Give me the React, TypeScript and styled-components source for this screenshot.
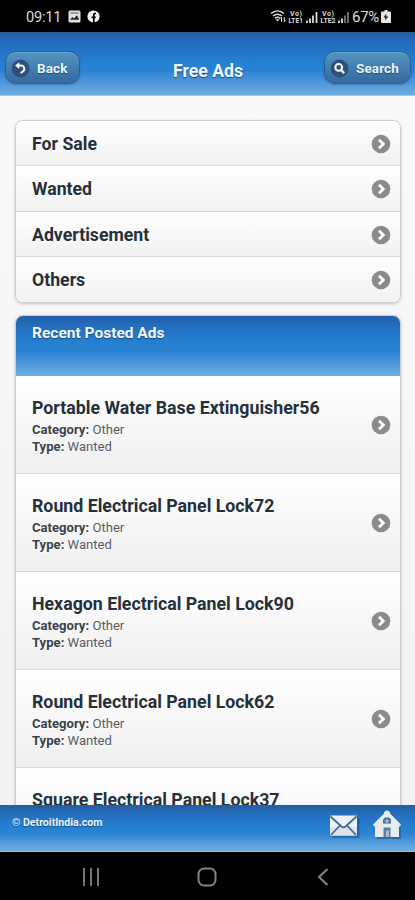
import React from "react";
import styled, { createGlobalStyle } from "styled-components";

const GlobalStyle = createGlobalStyle`
  * { box-sizing: border-box; }
  body { margin: 0; background: #f6f6f6; font-family: Roboto, "Liberation Sans", sans-serif; }
`;

const BLUE = `linear-gradient(to bottom, #225fa8 0%, #2472c3 25%, #2583d3 50%, #2a80d0 60%, #4f99da 80%, #70ade0 100%)`;

const Screen = styled.div`
  width: 415px;
  height: 900px;
  overflow: hidden;
  display: flex;
  flex-direction: column;
  background: linear-gradient(to bottom, #fafafa, #f0f0f0);
`;

const StatusBar = styled.div`
  flex: none;
  height: 32px;
  padding: 0 24px 0 26px;
  display: flex;
  align-items: center;
  justify-content: space-between;
  background: #000;
  color: #dcdcdc;
`;

const StatusGroup = styled.div<{ $gap: number }>`
  display: flex;
  align-items: center;
  gap: ${(p) => p.$gap}px;
  height: 32px;
`;

const Clock = styled.span`
  font-size: 14.6px;
  line-height: 32px;
  width: 35px;
  letter-spacing: -0.2px;
  margin-right: 1px;
  padding-top: 2px;
`;

const Battery = styled.span`
  font-size: 15px;
  line-height: 32px;
  letter-spacing: -0.3px;
  padding-top: 2px;
`;

const Header = styled.header`
  flex: none;
  height: 64px;
  padding: 6px 4px 0 5px;
  display: grid;
  grid-template-columns: 87px 1fr 87px;
  align-items: center;
  background: ${BLUE};
  border-top: 1px solid #2a5c91;
  border-bottom: 1px solid #9cc6ea;
`;

const Title = styled.h1`
  margin: 7px 0 0;
  text-align: center;
  font-size: 17.6px;
  line-height: 22px;
  font-weight: 700;
  color: #f0f7fd;
  text-shadow: 0 1px 1px #194b7e;
`;

const HeaderButton = styled.button<{ $width: number }>`
  justify-self: ${(p) => (p.$width > 80 ? "end" : "start")};
  width: ${(p) => p.$width}px;
  height: 33px;
  padding: 2px 0 0 5px;
  display: flex;
  align-items: center;
  gap: 7px;
  border: 1px solid #2d5f91;
  border-radius: 11px;
  background: linear-gradient(to bottom, #5394c2, #34699f);
  box-shadow: inset 0 1px 0 #6ea7d0, 0 1px 2px rgba(20, 60, 110, 0.35);
  color: #edf5fb;
  font: 700 13.5px/20px Roboto, sans-serif;
  letter-spacing: 0.1px;
  text-shadow: 0 1px 1px #194b7e;
`;

const Content = styled.main`
  flex: 1;
  min-height: 0;
  overflow: hidden;
  padding: 24px 14px 0 15px;
`;

const Panel = styled.section`
  border: 1px solid #cdcdcd;
  border-radius: 8px;
  overflow: hidden;
  box-shadow: 0 1px 3px rgba(0, 0, 0, 0.22);
  margin-bottom: 12px;
`;

const MenuRow = styled.div`
  height: 45.25px;
  padding: 2px 9px 0 16px;
  display: flex;
  align-items: center;
  justify-content: space-between;
  background: linear-gradient(to bottom, #fff, #f1f1f1);
  border-bottom: 1px solid #d8d8d8;
  color: #263039;
  font-size: 17.7px;
  font-weight: 700;
  text-shadow: 0 1px 0 #fff;
  &:last-child { border-bottom: 0; }
`;

const PanelHeader = styled.h2`
  margin: -1px -1px 0;
  height: 61px;
  padding: 8px 17px;
  background: ${BLUE};
  color: #f0f7fd;
  font-size: 15.5px;
  line-height: 20px;
  font-weight: 700;
  text-shadow: 0 1px 1px #194b7e;
`;

const AdRow = styled.article`
  height: 98px;
  padding: 0 9px 0 16px;
  display: flex;
  align-items: center;
  justify-content: space-between;
  background: linear-gradient(to bottom, #fff, #efefef);
  border-bottom: 1px solid #d8d8d8;
  color: #263039;
`;

const AdText = styled.div`
  align-self: flex-start;
  padding-top: 20px;
  white-space: nowrap;
  text-shadow: 0 1px 0 #fff;
`;

const AdTitle = styled.h3`
  margin: 0 0 1px;
  font-size: 17.75px;
  line-height: 24px;
  font-weight: 700;
`;

const Meta = styled.p`
  margin: 0;
  font-size: 13.1px;
  line-height: 17px;
  color: #555b60;
  b { color: #3a4249; font-weight: 700; }
`;

const Footer = styled.footer`
  flex: none;
  height: 47px;
  padding: 0 11px 0 12px;
  display: flex;
  justify-content: space-between;
  background: ${BLUE};
  border-top: 1px solid #23609f;
  border-bottom: 1px solid #8ebfe8;
`;

const Copyright = styled.span`
  padding-top: 9px;
  font-size: 10.6px;
  line-height: 15px;
  font-weight: 700;
  color: #e9f3fc;
  text-shadow: 0 1px 1px #194b7e;
`;

const FooterIcons = styled.div`
  display: flex;
  gap: 11px;
  padding-top: 4px;
`;

const NavBar = styled.nav`
  flex: none;
  height: 48px;
  display: grid;
  grid-template-columns: 1fr 1fr 1fr;
  justify-items: center;
  background: #000;
  align-items: center;
  padding: 2px 34px 0 33px;
`;

const Arrow = () => (
  <svg width="20" height="20" viewBox="0 0 20 20">
    <circle cx="10" cy="10" r="9.3" fill="#8b8b8b" />
    <path d="M8 5.7 12.3 10 8 14.3" fill="none" stroke="#fff" strokeWidth="2.8" />
  </svg>
);

const BackIcon = () => (
  <svg width="19" height="19" viewBox="0 0 19 19">
    <circle cx="9.5" cy="9.5" r="9" fill="#2b517b" />
    <path d="M6.5 6.6H10a3.2 3.2 0 0 1 1.6 6L9.6 14" fill="none" stroke="#f5f9fc" strokeWidth="2" />
    <path d="M4 6.6 8.3 3.3v6.6z" fill="#f5f9fc" />
  </svg>
);

const SearchIcon = () => (
  <svg width="19" height="19" viewBox="0 0 19 19">
    <circle cx="9.5" cy="9.5" r="9" fill="#2b517b" />
    <circle cx="8.7" cy="8.4" r="3.4" fill="none" stroke="#f5f9fc" strokeWidth="2" />
    <path d="m11 11 3.2 3.2" stroke="#f5f9fc" strokeWidth="2.4" />
  </svg>
);

const PictureIcon = () => (
  <svg width="13" height="13" viewBox="0 0 13 13">
    <rect x=".5" y=".5" width="12" height="12" rx="1.5" fill="#e2e2e2" />
    <path d="M2 9.8 4.3 7l1.7 1.6L9 5.2l2.2 4.6z" fill="#222" />
    <path d="M2.3 3h8.4" stroke="#555" />
  </svg>
);

const FacebookIcon = () => (
  <svg width="13" height="13" viewBox="0 0 13 13">
    <circle cx="6.5" cy="6.5" r="6.1" fill="#f0f0f0" />
    <path d="M6.8 13V5.2c0-1.4.6-1.9 2.1-1.8M4.5 7.3h4.2" fill="none" stroke="#000" strokeWidth="1.7" />
  </svg>
);

const SignalIcons = () => (
  <svg width="80" height="15" viewBox="0 0 80 15" fill="none" stroke="#dcdcdc">
    <path d="M1 4.5c4-3.3 9.2-3.3 13 0M3 7c2.8-2.3 6.2-2.3 9 0M5 9.3c1.7-1.3 3.3-1.3 5 0" strokeWidth="1.5" />
    <path d="m7.5 12.5-2-2.3h4z" fill="#dcdcdc" stroke="none" />
    <path d="M11.5 8v5m0-5-1.3 1.5M14.3 13V8m0 5 1.2-1.5" />
    <g fill="#dcdcdc" stroke="none" fontFamily="Roboto, sans-serif" fontWeight="700">
      <text x="20" y="7" fontSize="7" textLength="12">Vo)</text>
      <text x="18.5" y="14" fontSize="7" textLength="14.5" lengthAdjust="spacingAndGlyphs">LTE1</text>
      <text x="52" y="7" fontSize="7" textLength="12">Vo)</text>
      <text x="50.5" y="14" fontSize="7" textLength="15" lengthAdjust="spacingAndGlyphs">LTE2</text>
    </g>
    <path d="M37 14v-2.5M40 14V9.5M43 14V6.5M46.5 14V3" strokeWidth="1.8" />
    <path d="M69 14v-2.5M72 14V9.5" strokeWidth="1.8" />
    <path d="M75 14V6.5M78 14V3" strokeWidth="1.8" stroke="#777" />
  </svg>
);

const BatteryIcon = () => (
  <svg width="10" height="14" viewBox="0 0 10 14">
    <path d="M3.5 1h3v1.5H9a1 1 0 0 1 1 1V13a1 1 0 0 1-1 1H1a1 1 0 0 1-1-1V3.500a1 1 0 0 1 1-1h2.500z" fill="#e6e6e6" />
    <path d="M5.3 4.5 2.6 8.500h1.900l-.5 3L7.300 7.500H5.200z" fill="#111" />
  </svg>
);

const MailIcon = () => (
  <svg width="32" height="32" viewBox="0 0 32 32">
    <rect x="3" y="8" width="27.5" height="20" fill="#174e87" opacity=".5" />
    <rect x="1" y="5.500" width="27" height="20" rx="1" fill="#eef1f3" />
    <path d="M1 17h27v8.500H1z" fill="#dfe3e6" />
    <path d="m1.500 6.500 11 10q2 1.800 4 0l11-10M2 25l8.500-9M27 25l-8.500-9" fill="none" stroke="#3c6b95" strokeWidth="1.700" />
  </svg>
);

const HomeIcon = () => (
  <svg width="32" height="32" viewBox="0 0 32 32">
    <path d="M5 29V18L17 5l12 13v11z" fill="#174e87" opacity=".55" />
    <path d="M1 14.500 12 3.500V2l3-1.700L18 2v1.500l11 11-1 2h-1v10.500H3V16.500H2z" fill="#e8ebee" />
    <path d="M11.500 27v-9.500h7V27" fill="#58819f" />
    <path d="M14 20.500h3V27h-3z" fill="#a8bacb" />
    <path d="M11 13.500v-4L13 7.500h4l2 2v4z" fill="#416f9a" />
    <path d="M12.500 11h5M15 9v4" stroke="#c8d5df" />
  </svg>
);

const RecentsIcon = () => (
  <svg width="20" height="18" viewBox="0 0 20 18">
    <path d="M3 0v18M10 0v18M17 0v18" stroke="#777" strokeWidth="2" />
  </svg>
);
const CircleIcon = () => (
  <svg width="20" height="20" viewBox="0 0 20 20">
    <rect x="1.500" y="1.500" width="17" height="17" rx="5.500" fill="none" stroke="#858585" strokeWidth="2" />
  </svg>
);
const ChevronIcon = () => (
  <svg width="12" height="18" viewBox="0 0 12 18">
    <path d="M10.500 1 2 9l8.500 8" fill="none" stroke="#858585" strokeWidth="2" />
  </svg>
);

const categories = ["For Sale", "Wanted", "Advertisement", "Others"];
const ads: { title: string; category?: string; type?: string }[] = [
  { title: "Portable Water Base Extinguisher56", category: "Other", type: "Wanted" },
  { title: "Round Electrical Panel Lock72", category: "Other", type: "Wanted" },
  { title: "Hexagon Electrical Panel Lock90", category: "Other", type: "Wanted" },
  { title: "Round Electrical Panel Lock62", category: "Other", type: "Wanted" },
  { title: "Square Electrical Panel Lock37" },
];

export default function App() {
  return (
    <Screen>
      <GlobalStyle />
      <StatusBar>
        <StatusGroup $gap={6}>
          <Clock>09:11</Clock>
          <PictureIcon />
          <FacebookIcon />
        </StatusGroup>
        <StatusGroup $gap={2}>
          <SignalIcons />
          <Battery>67%</Battery>
          <BatteryIcon />
        </StatusGroup>
      </StatusBar>
      <Header>
        <HeaderButton $width={75}><BackIcon />Back</HeaderButton>
        <Title>Free Ads</Title>
        <HeaderButton $width={87}><SearchIcon />Search</HeaderButton>
      </Header>
      <Content>
        <Panel>
          {categories.map((name) => (
            <MenuRow key={name}>{name}<Arrow /></MenuRow>
          ))}
        </Panel>
        <Panel>
          <PanelHeader>Recent Posted Ads</PanelHeader>
          {ads.map((ad) => (
            <AdRow key={ad.title}>
              <AdText>
                <AdTitle>{ad.title}</AdTitle>
                {ad.category && <Meta><b>Category:</b> {ad.category}</Meta>}
                {ad.type && <Meta><b>Type:</b> {ad.type}</Meta>}
              </AdText>
              <Arrow />
            </AdRow>
          ))}
        </Panel>
      </Content>
      <Footer>
        <Copyright>© DetroitIndia.com</Copyright>
        <FooterIcons><MailIcon /><HomeIcon /></FooterIcons>
      </Footer>
      <NavBar><RecentsIcon /><CircleIcon /><ChevronIcon /></NavBar>
    </Screen>
  );
}
